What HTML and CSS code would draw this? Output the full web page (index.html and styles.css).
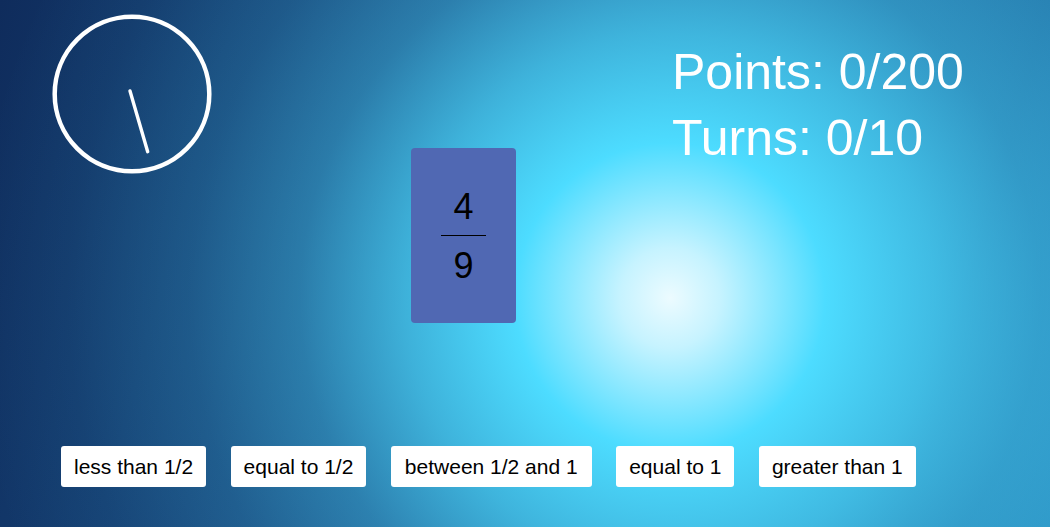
FILE: index.html
```html
<!DOCTYPE html>
<html lang="en">
<head>
<meta charset="utf-8">
<title>Fractions Game</title>
<link rel="stylesheet" href="styles.css">
</head>
<body>
<main class="game">
  <section class="board">
    <div class="clock">
      <svg width="160" height="160" viewBox="0 0 160 160" aria-hidden="true">
        <circle cx="80" cy="80" r="77.3" fill="none" stroke="#fff" stroke-width="4.5"/>
        <line x1="78" y1="77" x2="95.7" y2="137.7" stroke="#fff" stroke-width="3.4" stroke-linecap="round"/>
      </svg>
    </div>
    <div class="card">
      <span class="num">4</span>
      <span class="bar"></span>
      <span class="den">9</span>
    </div>
    <div class="score">
      <div class="score-line">Points: 0/200</div>
      <div class="score-line">Turns: 0/10</div>
    </div>
  </section>
  <nav class="answers">
    <button class="answer">less than 1/2</button>
    <button class="answer">equal to 1/2</button>
    <button class="answer answer-wide">between 1/2 and 1</button>
    <button class="answer">equal to 1</button>
    <button class="answer">greater than 1</button>
  </nav>
</main>
</body>
</html>
```
FILE: styles.css
```css
html, body {
  margin: 0;
  padding: 0;
  width: 1050px;
  height: 527px;
  overflow: hidden;
}
body {
  font-family: "Liberation Sans", Arial, sans-serif;
  background:
    radial-gradient(circle at 670px 298px,
      #ecfbff 0px, #c6f3ff 50px, #4ddcff 155px,
      rgba(77, 220, 255, 0.7) 265px, rgba(77, 220, 255, 0.36) 370px,
      rgba(77, 220, 255, 0.17) 480px, rgba(77, 220, 255, 0.05) 600px,
      rgba(77, 220, 255, 0) 700px),
    linear-gradient(105deg, #0f2c5c 0%, #143d70 20%, #1b4f85 45%, #2272a6 88%, #2888bb 100%);
}
.game {
  display: flex;
  flex-direction: column;
  height: 527px;
}
.board {
  display: grid;
  grid-template-columns: 411px 105px 1fr;
  height: 446px;
}
.clock {
  padding: 14px 0 0 52px;
}
.clock svg {
  display: block;
}
.card {
  margin-top: 148px;
  height: 175px;
  background: #5068b3;
  border-radius: 4px;
  display: flex;
  flex-direction: column;
  align-items: center;
  justify-content: center;
  color: #000;
  font-size: 36px;
}
.num, .den {
  line-height: 36px;
}
.num {
  padding-top: 1px;
}
.bar {
  width: 45px;
  height: 1px;
  background: #000;
  margin: 10px 0 12px;
}
.score {
  padding: 39px 0 0 156px;
  color: #fff;
  font-size: 50px;
  line-height: 66px;
  white-space: nowrap;
}
.answers {
  display: flex;
  gap: 24.5px;
  padding-left: 61px;
}
.answer {
  height: 41px;
  padding: 0 13px;
  border: none;
  border-radius: 3px;
  background: #fff;
  color: #000;
  font-family: "Liberation Sans", Arial, sans-serif;
  font-size: 21px;
}
.answer-wide {
  padding: 0 14px;
}
```
